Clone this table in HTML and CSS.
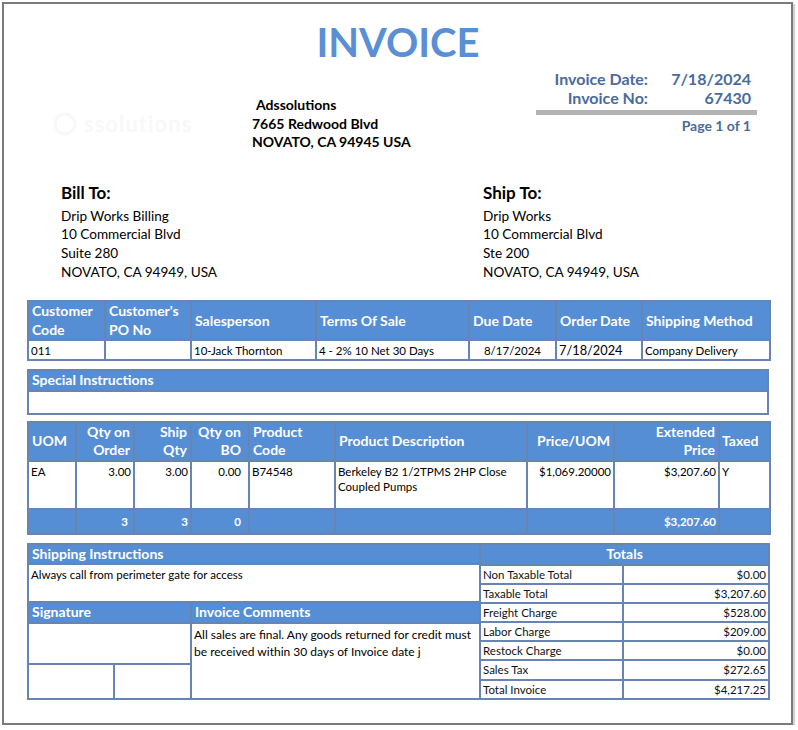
FILE: index.html
```html
<!DOCTYPE html>
<html lang="en">
<head>
<meta charset="utf-8">
<title>Invoice 67430</title>
<link rel="stylesheet" href="styles.css">
</head>
<body>
<div class="page">
  <header class="top">
    <h1 class="title">INVOICE</h1>
    <div class="top-row">
      <div class="company">
        <div class="logo">
          <svg class="logo-mark" width="26" height="26" viewBox="0 0 26 26"><circle cx="13" cy="13" r="10" fill="none" stroke="#f8f8f8" stroke-width="3"/></svg>
          <span class="logo-text">ssolutions</span>
        </div>
        <div class="address">
          <div class="addr-name">Adssolutions</div>
          <div>7665 Redwood Blvd</div>
          <div>NOVATO, CA 94945 USA</div>
        </div>
      </div>
      <div class="meta">
        <div class="meta-grid">
          <span class="meta-label">Invoice Date:</span><span class="meta-value">7/18/2024</span>
          <span class="meta-label">Invoice No:</span><span class="meta-value">67430</span>
        </div>
        <div class="meta-rule"></div>
        <div class="page-no">Page 1 of 1</div>
      </div>
    </div>
  </header>

  <section class="parties">
    <div class="party">
      <h2 class="party-title">Bill To:</h2>
      <div class="party-line">Drip Works Billing</div>
      <div class="party-line">10 Commercial Blvd</div>
      <div class="party-line">Suite 280</div>
      <div class="party-line">NOVATO, CA 94949, USA</div>
    </div>
    <div class="party">
      <h2 class="party-title">Ship To:</h2>
      <div class="party-line">Drip Works</div>
      <div class="party-line">10 Commercial Blvd</div>
      <div class="party-line">Ste 200</div>
      <div class="party-line">NOVATO, CA 94949, USA</div>
    </div>
  </section>

  <table class="grid info">
    <colgroup>
      <col class="w77"><col class="w86"><col class="w125"><col class="w153"><col class="w87"><col class="w86"><col class="w128">
    </colgroup>
    <tr class="hrow2">
      <th>Customer<br>Code</th>
      <th>Customer's<br>PO No</th>
      <th>Salesperson</th>
      <th>Terms Of Sale</th>
      <th>Due Date</th>
      <th>Order Date</th>
      <th>Shipping Method</th>
    </tr>
    <tr class="drow">
      <td>011</td>
      <td></td>
      <td>10-Jack Thornton</td>
      <td>4 - 2% 10 Net 30 Days</td>
      <td class="center">8/17/2024</td>
      <td class="big">7/18/2024</td>
      <td>Company Delivery</td>
    </tr>
  </table>

  <table class="grid special">
    <tr class="hrow1"><th>Special Instructions</th></tr>
    <tr class="srow"><td></td></tr>
  </table>

  <table class="grid items">
    <colgroup>
      <col class="w48"><col class="w58"><col class="w57"><col class="w58"><col class="w86"><col class="w192"><col class="w87"><col class="w105"><col class="w51">
    </colgroup>
    <tr class="hrow2i">
      <th>UOM</th>
      <th class="right pr3">Qty on<br>Order</th>
      <th class="right pr3">Ship<br>Qty</th>
      <th class="right pr7">Qty on<br>BO</th>
      <th>Product<br>Code</th>
      <th>Product Description</th>
      <th class="right pr3">Price/UOM</th>
      <th class="right pr3">Extended<br>Price</th>
      <th class="tight">Taxed</th>
    </tr>
    <tr class="irow">
      <td>EA</td>
      <td class="right">3.00</td>
      <td class="right">3.00</td>
      <td class="right pr7">0.00</td>
      <td>B74548</td>
      <td>Berkeley B2 1/2TPMS 2HP Close Coupled Pumps</td>
      <td class="right">$1,069.20000</td>
      <td class="right">$3,207.60</td>
      <td>Y</td>
    </tr>
    <tr class="trow">
      <td></td>
      <td class="right pr5">3</td>
      <td class="right">3</td>
      <td class="right pr7">0</td>
      <td></td>
      <td></td>
      <td></td>
      <td class="right">$3,207.60</td>
      <td></td>
    </tr>
  </table>

  <div class="bottom">
    <table class="grid notes">
      <colgroup><col class="w86"><col class="w77"><col class="w289"></colgroup>
      <tr class="hrow1"><th colspan="3">Shipping Instructions</th></tr>
      <tr class="nrow-ship"><td colspan="3" class="top-al">Always call from perimeter gate for access</td></tr>
      <tr class="hrow1b"><th colspan="2">Signature</th><th>Invoice Comments</th></tr>
      <tr class="nrow-sig">
        <td colspan="2"></td>
        <td rowspan="2" class="top-al comments">All sales are final. Any goods returned for credit must be received within 30 days of Invoice date j</td>
      </tr>
      <tr class="nrow-sub"><td></td><td></td></tr>
    </table>
    <table class="grid totals">
      <colgroup><col class="w143"><col class="w146"></colgroup>
      <tr class="hrow1"><th colspan="2" class="center">Totals</th></tr>
      <tr><td>Non Taxable Total</td><td class="right">$0.00</td></tr>
      <tr><td>Taxable Total</td><td class="right">$3,207.60</td></tr>
      <tr><td>Freight Charge</td><td class="right">$528.00</td></tr>
      <tr><td>Labor Charge</td><td class="right">$209.00</td></tr>
      <tr><td>Restock Charge</td><td class="right">$0.00</td></tr>
      <tr><td>Sales Tax</td><td class="right">$272.65</td></tr>
      <tr><td>Total Invoice</td><td class="right">$4,217.25</td></tr>
    </table>
  </div>
</div>
</body>
</html>
```

FILE: styles.css
```css
* { box-sizing: border-box; }
html, body { margin: 0; padding: 0; background: #ffffff; }
body { font-family: Lato, "Liberation Sans", sans-serif; color: #000; }

.page {
  margin: 2px 0 0 2px;
  width: 791px;
  height: 723px;
  border: 2px solid #7b7b7b;
  box-shadow: 2px 2px 1px #d2d2d2;
  padding: 17px 22px 0 23px;
  overflow: hidden;
}

/* header */
.title {
  margin: 0;
  font-size: 40px;
  line-height: 43px;
  font-weight: 700;
  color: #5a8fd6;
  text-align: center;
}
.top-row { display: flex; align-items: flex-start; }
.company { display: flex; align-items: flex-start; }
.logo {
  width: 200px;
  margin: 46px 0 0 25px;
  display: flex;
  align-items: center;
  gap: 6px;
}
.logo-text { font-size: 22px; color: #f8f8f8; font-weight: 700; letter-spacing: 1px; }
.address {
  margin: 32px 0 0 0;
  font-size: 14px;
  font-weight: 700;
  line-height: 18.5px;
}
.addr-name { padding-left: 4px; }

.meta { margin-left: auto; margin-right: 12px; width: 221px; margin-top: 6px; color: #4a6b9c; font-weight: 700; }
.meta-grid {
  display: grid;
  grid-template-columns: 1fr 103px;
  padding-right: 6px;
  font-size: 16px;
  line-height: 18.5px;
}
.meta-label { text-align: right; }
.meta-value { text-align: right; }
.meta-rule { height: 5px; background: #b3b3b3; margin-top: 3px; }
.page-no { margin-top: 2px; text-align: right; padding-right: 6px; font-size: 14px; line-height: 18px; }

/* parties */
.parties { display: grid; grid-template-columns: 422px 1fr; padding-left: 34px; margin-top: 30px; }
.party-title { margin: 0 0 3px; font-size: 17px; line-height: 22px; font-weight: 700; }
.party-line { font-size: 13.6px; line-height: 18.7px; }

/* tables */
.grid {
  border-collapse: collapse;
  table-layout: fixed;
  width: 742px;
}
.grid th, .grid td { border: 2px solid #6884b3; padding: 0 3px; overflow: hidden; white-space: nowrap; }
.grid th {
  background: #558ed5;
  color: #fff;
  font-size: 14px;
  font-weight: 700;
  line-height: 18.5px;
  text-align: left;
  vertical-align: middle;
}
.grid td { font-size: 11.5px; line-height: 15px; vertical-align: middle; padding: 0 2px; }

.info { margin-top: 19px; }
.hrow2 th { height: 38px; }
.drow td { height: 20px; }
.big { font-size: 12.8px !important; }

.special { margin-top: 8px; }
.hrow1 th { height: 18px; }
.hrow1b th { height: 19px; }
.srow td { height: 23px; }

.items { margin-top: 6px; }
.hrow2i th { height: 39px; }
.irow td { height: 48px; vertical-align: top; padding-top: 2px; white-space: normal; }
.trow td { height: 25px; background: #558ed5; color: #fff; font-weight: 700; }

.bottom { display: flex; margin-top: 8px; }
.notes { width: 452px; }
.totals { width: 289px; margin-left: -2px; }
.nrow-ship td { height: 38px; }
.nrow-sig td { height: 41px; }
.nrow-sub td { height: 35px; }
.top-al { vertical-align: top !important; white-space: normal !important; padding-top: 2px !important; }
.comments { font-size: 12px !important; line-height: 17.5px !important; padding-right: 4px !important; }
.totals td { height: 18.9px; color: #111; }

.right { text-align: right !important; }
.center { text-align: center !important; }
.pr3 { padding-right: 3px !important; }
.pr5 { padding-right: 5px !important; }
.pr7 { padding-right: 7px !important; }
.tight { padding: 0 2px !important; }

.w48 { width: 48px; } .w51 { width: 51px; } .w57 { width: 57px; } .w58 { width: 58px; }
.w77 { width: 77px; } .w86 { width: 86px; } .w87 { width: 87px; } .w105 { width: 105px; }
.w125 { width: 125px; } .w128 { width: 128px; } .w143 { width: 143px; } .w146 { width: 146px; }
.w153 { width: 153px; } .w192 { width: 192px; } .w289 { width: 289px; }
```
